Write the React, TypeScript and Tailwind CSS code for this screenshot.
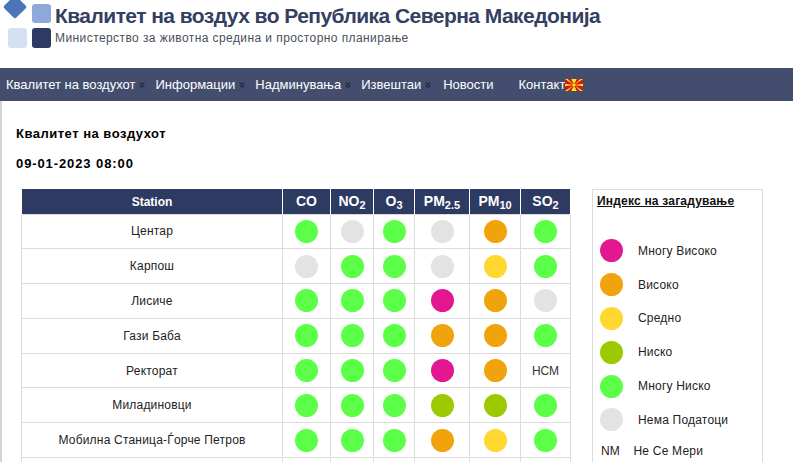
import { ChevronsDown } from "lucide-react";

type Level = "vh" | "h" | "m" | "l" | "vl" | "na";

const DOT: Record<Level, string> = {
  vh: "bg-[#e3178f]",
  h: "bg-[#f0a30a]",
  m: "bg-[#ffd72e]",
  l: "bg-[#9cc900]",
  vl: "bg-[#5cff47]",
  na: "bg-[#e3e3e3]",
};

const NAV = ["Квалитет на воздухот", "Информации", "Надминувања", "Извештаи"];

const ROWS: { name: string; cells: (Level | string)[] }[] = [
  { name: "Центар", cells: ["vl", "na", "vl", "na", "h", "vl"] },
  { name: "Карпош", cells: ["na", "vl", "vl", "na", "m", "vl"] },
  { name: "Лисиче", cells: ["vl", "vl", "vl", "vh", "h", "na"] },
  { name: "Гази Баба", cells: ["vl", "vl", "vl", "h", "h", "vl"] },
  { name: "Ректорат", cells: ["vl", "vl", "vl", "vh", "h", "НСМ"] },
  { name: "Миладиновци", cells: ["vl", "vl", "vl", "l", "l", "vl"] },
  { name: "Мобилна Станица-Ѓорче Петров", cells: ["vl", "vl", "vl", "h", "m", "vl"] },
  { name: "Кочани", cells: ["vl", "vl", "vl", "m", "m", "vl"] },
];

const LEGEND: { level: Level; label: string }[] = [
  { level: "vh", label: "Многу Високо" },
  { level: "h", label: "Високо" },
  { level: "m", label: "Средно" },
  { level: "l", label: "Ниско" },
  { level: "vl", label: "Многу Ниско" },
  { level: "na", label: "Нема Податоци" },
];

function Dot({ level }: { level: Level }) {
  return <span className={`block h-[23px] w-[23px] shrink-0 rounded-full ${DOT[level]}`} />;
}

function Logo() {
  return (
    <svg width="52" height="48" viewBox="0 0 52 48" className="shrink-0">
      <rect x="5.5" y="-1.5" width="17" height="17" rx="2" transform="rotate(45 14 7)" fill="#4a76b8" />
      <rect x="31" y="4" width="19" height="19" rx="3" fill="#8ea9d9" />
      <rect x="7" y="28" width="19" height="20" rx="3" fill="#d5e0f2" />
      <rect x="31" y="28" width="19" height="20" rx="3" fill="#2d3a62" />
    </svg>
  );
}

function Flag() {
  return (
    <svg width="18" height="12" viewBox="0 0 18 12" className="shrink-0">
      <rect width="18" height="12" fill="#d8141a" />
      <path d="M0 0h2.7L9 6 6.3 0h5.4L9 6l6.3-6H18L9 6l9 0v0L9 6l9 6h-2.7L9 6l2.7 6H6.3L9 6l-6.3 6H0l9-6z" fill="#f8e71c" />
      <path d="M0 4.8L9 6 0 7.2zM18 4.8L9 6l9 1.2z" fill="#f8e71c" />
      <circle cx="9" cy="6" r="2" fill="#f8e71c" stroke="#d8141a" strokeWidth="0.6" />
    </svg>
  );
}

function Chevrons({ className = "" }: { className?: string }) {
  return <ChevronsDown className={`h-[10px] w-[10px] shrink-0 text-[#1d2238] ${className}`} strokeWidth={2.5} />;
}

function Th({ w, children }: { w: string; children: React.ReactNode }) {
  return <th className={`${w} border-x border-white p-0 text-center text-[14px] font-bold leading-[16px] text-white`}>{children}</th>;
}

function Sub({ children }: { children: React.ReactNode }) {
  return <sub className="relative -bottom-[3px] align-baseline text-[11px] leading-none">{children}</sub>;
}

export default function App() {
  return (
    <div className="h-[462px] w-[793px] overflow-hidden bg-white font-['Liberation_Sans',Arial,sans-serif]">
      <header className="flex h-[68px] items-start pl-[1px]">
        <Logo />
        <div className="ml-[2px] pt-[4px]">
          <h1 className="text-[21px] font-bold leading-[24px] tracking-[-0.55px] text-[#34405f]">
            Квалитет на воздух во Република Северна Македонија
          </h1>
          <p className="mt-[1px] text-[12px] leading-[18px] tracking-[0.42px] text-[#4a4f5c]">
            Министерство за животна средина и просторно планирање
          </p>
        </div>
      </header>

      <nav className="flex h-[33px] items-center bg-[#434e6e] text-[13px] text-white">
        {NAV.map((item) => (
          <span key={item} className="ml-[6px] mr-[2px] flex items-center">
            {item}
            <Chevrons className="ml-[2px]" />
          </span>
        ))}
        <span className="ml-[8px]">Новости</span>
        <span className="ml-[25px]">Контакт</span>
        <Flag />
      </nav>

      <main className="border-l-2 border-[#d4d4d4] pl-[14px] pt-[25px]">
        <h2 className="text-[13px] font-bold leading-[16px] tracking-[0.5px] text-black">Квалитет на воздухот</h2>
        <p className="mt-[14px] text-[13px] font-bold leading-[16px] tracking-[0.9px] text-black">09-01-2023 08:00</p>

        <div className="mt-[17px] flex items-start">
          <table className="ml-[5px] w-[549px] table-fixed border-collapse">
            <thead>
              <tr className="h-[25px] bg-[#2d3a62]">
                <Th w="w-[261px]">
                  <span className="text-[12px]">Station</span>
                </Th>
                <Th w="w-[48px]">CO</Th>
                <Th w="w-[43px]">
                  NO<Sub>2</Sub>
                </Th>
                <Th w="w-[41px]">
                  O<Sub>3</Sub>
                </Th>
                <Th w="w-[55px]">
                  PM<Sub>2.5</Sub>
                </Th>
                <Th w="w-[51px]">
                  PM<Sub>10</Sub>
                </Th>
                <Th w="w-[50px]">
                  SO<Sub>2</Sub>
                </Th>
              </tr>
            </thead>
            <tbody>
              {ROWS.map((row) => (
                <tr key={row.name} className="h-[34.8px]">
                  <td className="border border-[#dcdcdc] p-0 text-center text-[12px] tracking-[0.2px] text-[#222]">{row.name}</td>
                  {row.cells.map((cell, i) => (
                    <td key={i} className="border border-[#dcdcdc] p-0 text-center text-[12px] text-[#333]">
                      {cell in DOT ? (
                        <span className="flex justify-center">
                          <Dot level={cell as Level} />
                        </span>
                      ) : (
                        cell
                      )}
                    </td>
                  ))}
                </tr>
              ))}
            </tbody>
          </table>

          <aside className="ml-[21px] h-[300px] w-[171px] shrink-0 border border-[#dcdcdc] pl-[4px] pt-[4px]">
            <h3 className="text-[12px] font-bold leading-[15px] tracking-[0.2px] text-[#111] underline">Индекс на загадување</h3>
            <ul className="mt-[25px]">
              {LEGEND.map((entry) => (
                <li key={entry.level} className="flex h-[33.8px] items-center pl-[3px] text-[12px] tracking-[0.2px] text-[#222]">
                  <Dot level={entry.level} />
                  <span className="ml-[15px]">{entry.label}</span>
                </li>
              ))}
              <li className="mt-[2px] flex h-[24px] items-center text-[12px] tracking-[0.2px] text-[#222]">
                <span className="w-[36.5px] pl-[4px]">NM</span>
                <span className="ml-[0px]">Не Се Мери</span>
              </li>
            </ul>
          </aside>
        </div>
      </main>
    </div>
  );
}
